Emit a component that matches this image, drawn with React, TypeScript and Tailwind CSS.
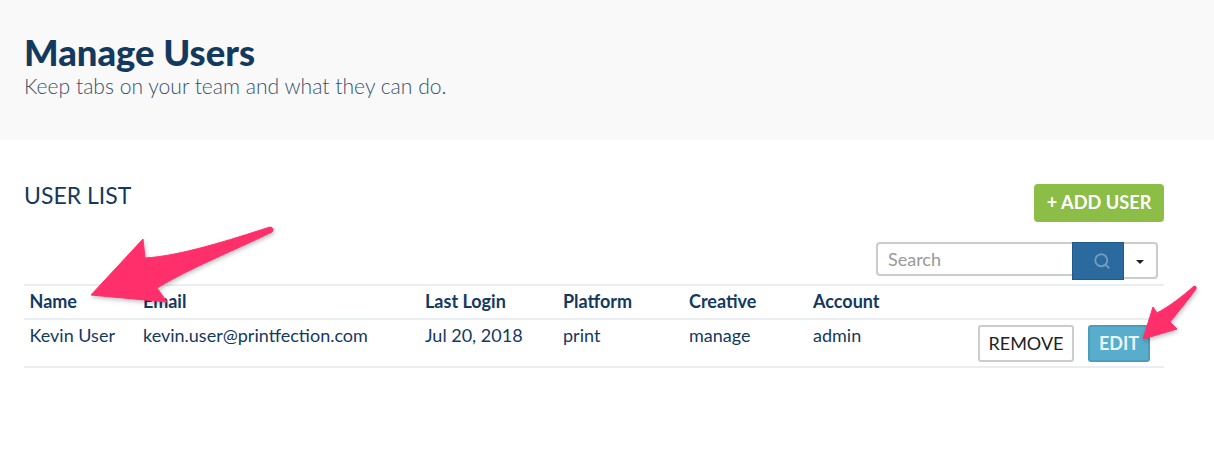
import { Search } from 'lucide-react'

const COLS = ['Name', 'Email', 'Last Login', 'Platform', 'Creative', 'Account']
const ROW = ['Kevin User', 'kevin.user@printfection.com', 'Jul 20, 2018', 'print', 'manage', 'admin']
const GRID = 'grid grid-cols-[113.5px_282px_138px_126px_124px_1fr] pl-[5.5px] pr-[6px]'

export default function App() {
  return (
    <div className="relative h-[450px] w-[1214px] overflow-hidden bg-white font-['Lato',sans-serif] text-[#14395f]">
      {/* Page header */}
      <header className="h-[140px] bg-[#f9f9f9] px-6 pt-[33px]">
        <h1 className="text-[36.4px] leading-[38px] font-black">Manage Users</h1>
        <p className="mt-[4px] text-[21.1px] leading-[22px] font-light text-[#36536f]">Keep tabs on your team and what they can do.</p>
      </header>

      <main className="pr-[50px] pl-6 pt-[43px]">
        <div className="flex items-start justify-between">
          <h2 className="text-[23px] leading-[24px]">USER LIST</h2>
          <button className="mt-[1px] h-[38px] w-[130px] rounded-[4px] bg-[#8bbd47] text-[18.2px] font-bold text-white">+ ADD USER</button>
        </div>

        {/* Search */}
        <div className="mt-[20px] flex justify-end pr-[6px]">
          <div className="flex h-[37px]">
            <input
              placeholder="Search"
              className="h-[34px] w-[196px] rounded-l-[4px] border-2 border-r-0 border-[#cccccc] px-[10px] text-[18px] placeholder:text-[#999999]"
            />
            <div className="flex h-[38px] w-[52px] items-center justify-end border border-[#1f5a8a] bg-[#2b6a9e] pr-[12px]">
              <Search size={18} strokeWidth={2.5} className="text-[#6f9cbf]" />
            </div>
            <div className="flex h-[37px] w-[34px] items-center justify-center rounded-r-[4px] border-2 border-l-0 border-[#cccccc]">
              <span className="mt-[2px] h-0 w-0 border-x-[4px] border-t-[4px] border-x-transparent border-t-[#222222]" />
            </div>
          </div>
        </div>

        {/* Table */}
        <div className="mt-[5px] border-y-2 border-[#e9eef2]">
          <div className={`${GRID} h-[34px] items-center border-b-2 border-[#e9eef2] pb-[2px] text-[18px] font-bold`}>
            {COLS.map((c) => (
              <div key={c}>{c}</div>
            ))}
          </div>
          <div className={`${GRID} relative h-[46px] pt-[2px] text-[18px]`}>
            {ROW.map((c) => (
              <div key={c}>{c}</div>
            ))}
            <div className="absolute top-[5px] right-[14px] flex gap-[14px]">
              <button className="h-[37px] w-[96px] rounded-[3px] border-2 border-[#cccccc] bg-white text-[18px] text-[#222222]">REMOVE</button>
              <button className="h-[37px] w-[62px] rounded-[3px] border-2 border-[#4b9dbb] bg-[#57adcb] text-[18px] font-bold text-[#e8f4f8]">EDIT</button>
            </div>
          </div>
        </div>
      </main>

      {/* Annotation arrows */}
      <svg className="pointer-events-none absolute inset-0 drop-shadow-[1px_2px_2px_rgba(0,0,0,0.25)]" width="1214" height="450" viewBox="0 0 1214 450">
        <path
          d="M91 295 L143 239 L145 258 C180 256 230 240 270 227 Q275 228 272 232 C235 250 190 268 157 288 L167 302 Z"
          fill="#ff2f6b"
          stroke="#ff2f6b"
          strokeWidth="1"
          strokeLinejoin="round"
        />
        <path
          d="M1143 339 L1153 307 L1157 313 C1170 306 1183 296 1194 286 Q1197 286 1196 289 C1188 300 1178 312 1170 322 L1177 329 Z"
          fill="#ff2f6b"
          stroke="#ff2f6b"
          strokeWidth="1"
          strokeLinejoin="round"
        />
      </svg>
    </div>
  )
}
